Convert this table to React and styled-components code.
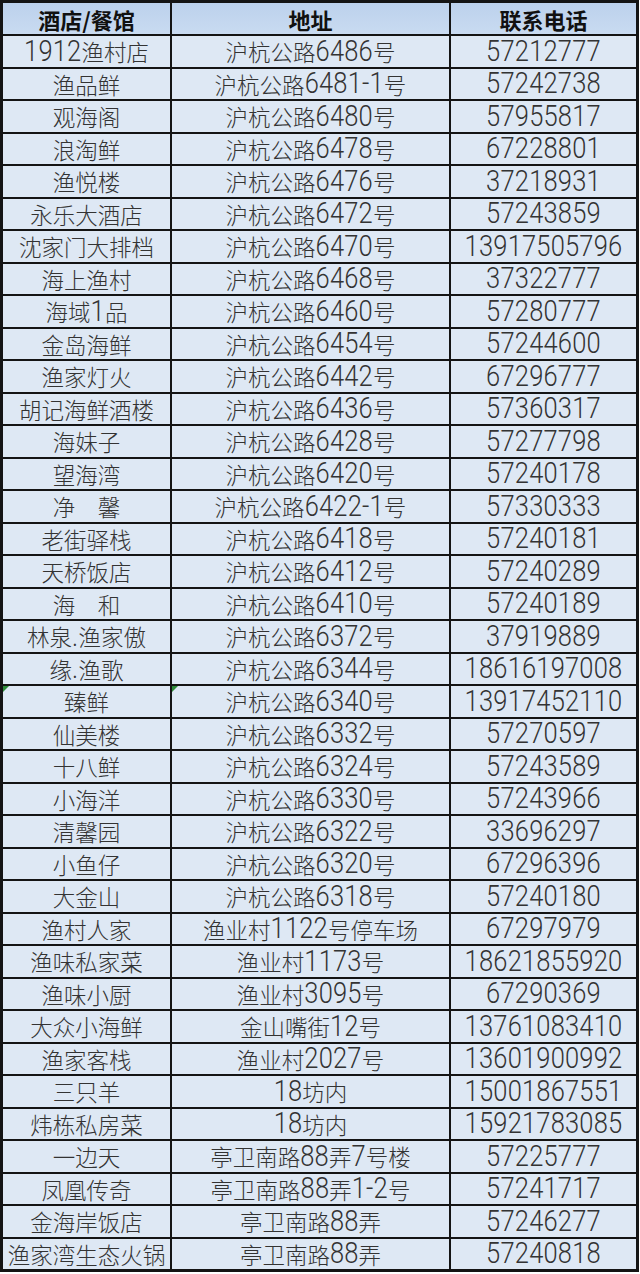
import React from 'react';
import styled, { createGlobalStyle } from 'styled-components';

const GlobalStyle = createGlobalStyle`
  body {
    margin: 0;
    padding: 0;
    background: #ffffff;
    font-family: 'Noto Sans CJK SC', 'Noto Sans', sans-serif;
  }
`;

const Sheet = styled.div`
  display: grid;
  grid-template-columns: 167px 277px 185px;
  grid-template-rows: 31px;
  grid-auto-rows: 30.5px;
  gap: 2px;
  padding: 3px;
  width: max-content;
  background: #141414;
`;

const Cell = styled.div`
  position: relative;
  display: flex;
  align-items: center;
  justify-content: center;
  white-space: nowrap;
  background: ${p => (p.$head ? 'linear-gradient(#bcd1ec, #c9dbf1)' : '#dee8f4')};
  color: ${p => (p.$head ? '#111111' : '#333333')};
  font-family: 'Noto Sans CJK SC', sans-serif;
  font-size: ${p => (p.$head ? '22px' : '22.5px')};
  font-weight: ${p => (p.$head ? 700 : 300)};
  line-height: 1;

  &::before {
    content: '';
    display: ${p => (p.$flag ? 'block' : 'none')};
    position: absolute;
    left: 0;
    top: 0;
    border-top: 6px solid #2e8b3a;
    border-right: 6px solid transparent;
  }
`;

const Latin = styled.span`
  display: inline-block;
  font-family: Roboto, 'Liberation Sans', sans-serif;
  font-weight: 300;
  font-size: 25.5px;
  transform: scaleY(1.15);
  letter-spacing: 0.2px;
`;

const rows = [
  ['1912渔村店', '沪杭公路6486号', '57212777'],
  ['渔品鲜', '沪杭公路6481-1号', '57242738'],
  ['观海阁', '沪杭公路6480号', '57955817'],
  ['浪淘鲜', '沪杭公路6478号', '67228801'],
  ['渔悦楼', '沪杭公路6476号', '37218931'],
  ['永乐大酒店', '沪杭公路6472号', '57243859'],
  ['沈家门大排档', '沪杭公路6470号', '13917505796'],
  ['海上渔村', '沪杭公路6468号', '37322777'],
  ['海域1品', '沪杭公路6460号', '57280777'],
  ['金岛海鲜', '沪杭公路6454号', '57244600'],
  ['渔家灯火', '沪杭公路6442号', '67296777'],
  ['胡记海鲜酒楼', '沪杭公路6436号', '57360317'],
  ['海妹子', '沪杭公路6428号', '57277798'],
  ['望海湾', '沪杭公路6420号', '57240178'],
  ['净　馨', '沪杭公路6422-1号', '57330333'],
  ['老街驿栈', '沪杭公路6418号', '57240181'],
  ['天桥饭店', '沪杭公路6412号', '57240289'],
  ['海　和', '沪杭公路6410号', '57240189'],
  ['林泉.渔家傲', '沪杭公路6372号', '37919889'],
  ['缘.渔歌', '沪杭公路6344号', '18616197008'],
  ['臻鲜', '沪杭公路6340号', '13917452110', true],
  ['仙美楼', '沪杭公路6332号', '57270597'],
  ['十八鲜', '沪杭公路6324号', '57243589'],
  ['小海洋', '沪杭公路6330号', '57243966'],
  ['清馨园', '沪杭公路6322号', '33696297'],
  ['小鱼仔', '沪杭公路6320号', '67296396'],
  ['大金山', '沪杭公路6318号', '57240180'],
  ['渔村人家', '渔业村1122号停车场', '67297979'],
  ['渔味私家菜', '渔业村1173号', '18621855920'],
  ['渔味小厨', '渔业村3095号', '67290369'],
  ['大众小海鲜', '金山嘴街12号', '13761083410'],
  ['渔家客栈', '渔业村2027号', '13601900992'],
  ['三只羊', '18坊内', '15001867551'],
  ['炜栋私房菜', '18坊内', '15921783085'],
  ['一边天', '亭卫南路88弄7号楼', '57225777'],
  ['凤凰传奇', '亭卫南路88弄1-2号', '57241717'],
  ['金海岸饭店', '亭卫南路88弄', '57246277'],
  ['渔家湾生态火锅', '亭卫南路88弄', '57240818'],
];

// digits and ascii get a taller face, like the source sheet
const Mixed = ({ text }) =>
  text.split(/([\x21-\x7e]+)/).map((part, i) =>
    i % 2 ? <Latin key={i}>{part}</Latin> : part
  );

export default function App() {
  return (
    <>
      <GlobalStyle />
      <Sheet>
        <Cell $head>酒店/餐馆</Cell>
        <Cell $head>地址</Cell>
        <Cell $head>联系电话</Cell>
        {rows.map(([name, addr, phone, flag]) => (
          <React.Fragment key={name}>
            <Cell $flag={flag}><Mixed text={name} /></Cell>
            <Cell $flag={flag}><Mixed text={addr} /></Cell>
            <Cell><Mixed text={phone} /></Cell>
          </React.Fragment>
        ))}
      </Sheet>
    </>
  );
}
